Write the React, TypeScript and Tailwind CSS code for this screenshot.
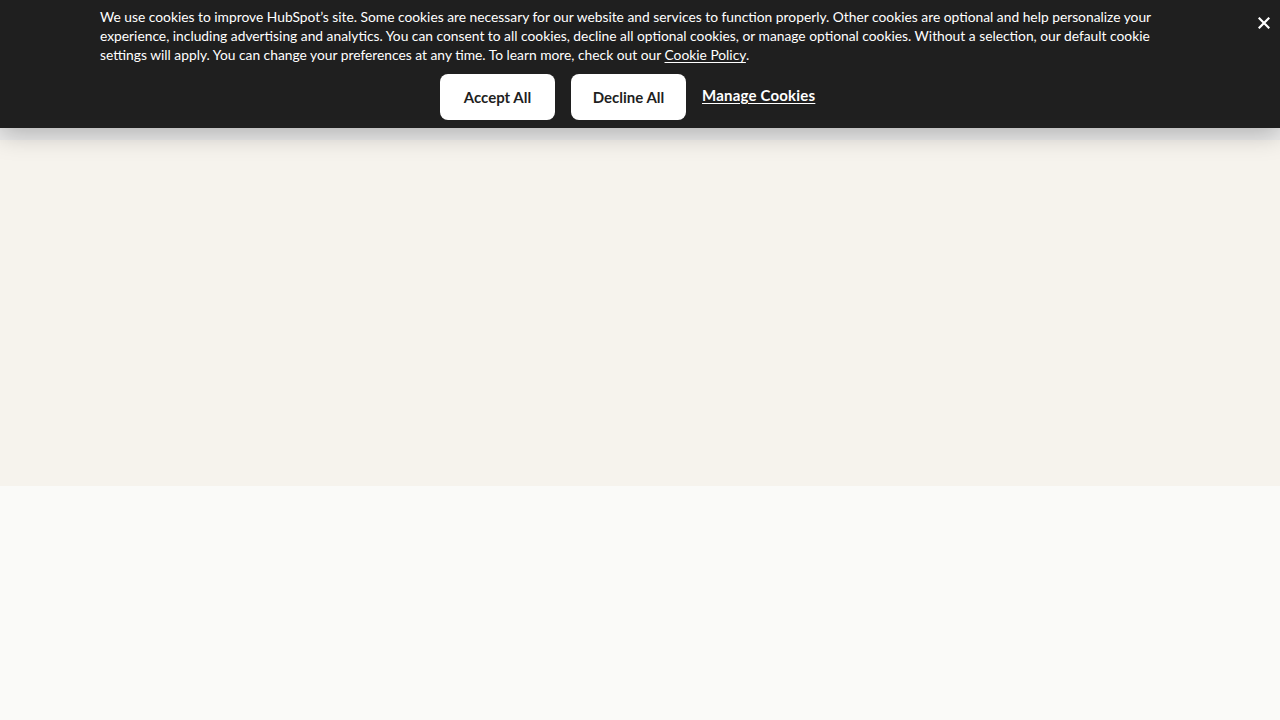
import React from "react";

export default function App() {
  return (
    <div className="min-h-[720px] w-full bg-[#fafaf8] relative" style={{ fontFamily: "Lato, 'Noto Sans', sans-serif" }}>
      <div className="relative z-10 h-[128px] bg-[#1f1f1f] shadow-[0_6px_24px_rgba(0,0,0,0.25)]">
        <div className="mx-auto w-[1080px] pt-[7px]">
          <p className="text-[13.8px] leading-[19px] text-white">
            We use cookies to improve HubSpot’s site. Some cookies are necessary for our website and services to function properly. Other cookies are optional and help personalize your experience, including advertising and analytics. You can consent to all cookies, decline all optional cookies, or manage optional cookies. Without a selection, our default cookie settings will apply. You can change your preferences at any time. To learn more, check out our{" "}
            <a className="underline underline-offset-2">Cookie Policy</a>.
          </p>
          <div className="mt-[10px] flex justify-center gap-4 pr-6">
            <button className="h-[46px] w-[115px] rounded-[8px] bg-white text-[15px] font-bold text-[#1f1f1f]">Accept All</button>
            <button className="h-[46px] w-[115px] rounded-[8px] bg-white text-[15px] font-bold text-[#1f1f1f]">Decline All</button>
            <a className="flex h-[46px] w-[114px] items-center text-[15px] font-bold text-white underline underline-offset-2 -mt-[2px] tracking-[0.2px]">Manage Cookies</a>
          </div>
        </div>
        <button className="absolute right-[8px] top-[15px] flex h-[16px] w-[16px] items-center justify-center">
          <svg width="12" height="12" viewBox="0 0 12 12">
            <path d="M1.5 1.5 L10.5 10.5 M10.5 1.5 L1.5 10.5" stroke="white" strokeWidth="2.2" strokeLinecap="square" />
          </svg>
        </button>
      </div>
      <div className="h-[12px] bg-[#ececec]" />
      <div className="h-[346px] bg-[#f6f3ed]" />
    </div>
  );
}
